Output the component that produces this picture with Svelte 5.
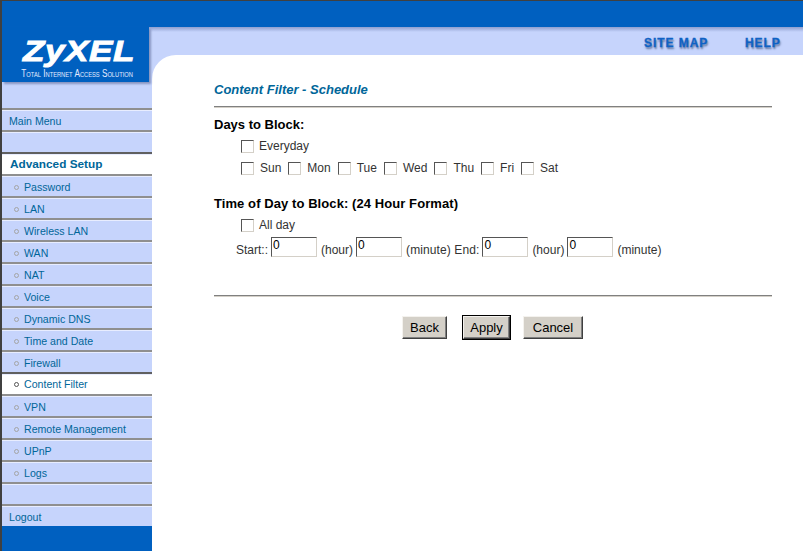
<script>
  const items = ['Password', 'LAN', 'Wireless LAN', 'WAN', 'NAT', 'Voice', 'Dynamic DNS', 'Time and Date', 'Firewall', 'Content Filter', 'VPN', 'Remote Management', 'UPnP', 'Logs'];
  const active = 'Content Filter';
  const days = ['Sun', 'Mon', 'Tue', 'Wed', 'Thu', 'Fri', 'Sat'];
</script>

<div class="page">
  <header class="top">
    <div class="band"></div>
    <div class="strip">
      <div class="shade"></div>
      <nav class="links">
        <span class="site">SITE MAP</span>
        <span class="help">HELP</span>
      </nav>
    </div>
  </header>

  <div class="logo">
    <div class="word">ZyXEL</div>
    <div class="tag">Total Internet Access Solution</div>
  </div>

  <div class="body">
    <aside class="side">
      <div class="gap"></div>
      <div class="row plain">Main Menu</div>
      <div class="row"></div>
      <div class="row head">Advanced Setup</div>
      {#each items as item}
        <div class="row sub" class:on={item === active}>
          <i class="dot"></i>{item}
        </div>
      {/each}
      <div class="row"></div>
      <div class="row plain">Logout</div>
      <div class="foot"></div>
    </aside>

    <main class="main">
      <h1>Content Filter - Schedule</h1>
      <hr />
      <h2 class="days">Days to Block:</h2>
      <div class="line every"><span class="box"></span><span>Everyday</span></div>
      <div class="line week">
        {#each days as d}
          <span class="box"></span><span class="day">{d}</span>
        {/each}
      </div>
      <h2 class="time">Time of Day to Block: (24 Hour Format)</h2>
      <div class="line allday"><span class="box"></span><span>All day</span></div>
      <div class="line hours">
        <span>Start::</span><input value="0" /><span>(hour)</span><input value="0" /><span class="end">(minute) End:</span><input value="0" /><span>(hour)</span><input value="0" /><span>(minute)</span>
      </div>
      <hr class="low" />
      <div class="btns">
        <button class="back">Back</button>
        <button class="def">Apply</button>
        <button class="cancel">Cancel</button>
      </div>
    </main>
  </div>
</div>

<style>
  :global(body) {
    margin: 0;
    background: #fff;
  }
  .page {
    width: 803px;
    height: 551px;
    position: relative;
    overflow: hidden;
    background: #fff;
    font-family: "Liberation Sans", Arial, sans-serif;
    font-size: 12px;
    color: #333;
    border-top: 1px solid #404040;
    border-left: 2px solid #404040;
    box-sizing: border-box;
  }
  .band {
    height: 26px;
    background: #0060c0;
  }
  .strip {
    height: 28px;
    background: #c6d4fc;
    position: relative;
  }
  .shade {
    height: 5px;
    background: linear-gradient(#8e9fcf, #c6d4fc);
  }
  .links {
    font-weight: 700;
    font-size: 12px;
    color: #0f62c4;
    text-shadow: 1px 2px 2px #5a6f9a;
    letter-spacing: 0.95px;
    -webkit-text-stroke: 0.3px #0f62c4;
  }
  .links span {
    position: absolute;
    top: 9px;
  }
  .site { left: 642px; }
  .help { left: 743px; }

  .logo {
    position: absolute;
    left: 0;
    top: 26px;
    width: 147px;
    height: 55px;
    background: #0060c0;
    box-shadow: 2px 2px 2px #8795c0;
    color: #fff;
  }
  .word {
    font-weight: 700;
    font-style: italic;
    font-size: 30px;
    line-height: 28px;
    margin-top: 9.5px;
    text-align: center;
    letter-spacing: 0.5px;
    padding-left: 6px;
    -webkit-text-stroke: 0.9px #fff;
    transform: scaleX(1.17);
  }
  .tag {
    display: flex;
    justify-content: center;
    font-size: 10px;
    line-height: 10px;
    margin-top: 4px;
    padding-left: 4px;
    font-variant: small-caps;
    white-space: nowrap;
    color: #e4ebff;
    transform: scaleX(0.82);
  }

  .body {
    display: flex;
    height: 496px;
    background: #c6d4fc;
  }
  .side {
    width: 150px;
    background: #c6d4fc;
    display: flex;
    flex-direction: column;
    color: #006699;
    flex: none;
    font-size: 10.6px;
  }
  .gap {
    height: 53px;
    flex: none;
  }
  .row {
    height: 18px;
    padding-top: 2px;
    line-height: 19px;
    border-top: 2px solid #8f8f8f;
    box-shadow: inset 0 1px 0 #e8edff;
    flex: none;
  }
  .plain {
    padding-left: 7px;
  }
  .head {
    background: #fff;
    font-weight: 700;
    font-size: 11.8px;
    padding-left: 8px;
    padding-top: 1px;
    height: 19px;
    border-top-color: #606060;
  }
  .sub {
    padding-left: 12px;
    display: flex;
    align-items: center;
  }
  .sub.on {
    background: #fff;
    border-top-color: #606060;
    height: 20px;
    padding-top: 0;
  }
  .dot {
    width: 3px;
    height: 3px;
    border: 1px solid #a4a4a4;
    border-radius: 50%;
    margin-right: 5px;
    flex: none;
  }
  .on .dot {
    border-color: #555;
  }
  .foot {
    flex: 1;
    background: #0060c0;
  }

  .main {
    flex: 1;
    background: #fff;
    border-top-left-radius: 24px;
    padding: 28px 31px 0 62px;
    box-sizing: border-box;
  }
  h1 {
    margin: 0;
    font-size: 13px;
    line-height: 14px;
    font-style: italic;
    font-weight: 700;
    color: #006699;
  }
  hr {
    margin: 9px 0 0;
    height: 2px;
    border: 0;
    background: linear-gradient(#808080 50%, #d4d0c8 50%);
  }
  h2 {
    margin: 0;
    font-size: 13px;
    line-height: 14px;
    font-weight: 700;
    color: #000;
  }
  .days { margin-top: 10px; }
  .time { margin-top: 22px; letter-spacing: 0.08px; }
  .line {
    display: flex;
    align-items: center;
    white-space: nowrap;
    height: 14px;
  }
  .every { margin: 7px 0 0 27px; }
  .week { margin: 8px 0 0 27px; }
  .allday { margin: 7px 0 0 27px; }
  .hours { margin: 5px 0 0 22px; height: 20px; }
  .box {
    width: 11px;
    height: 11px;
    border: 1px solid;
    border-color: #555 #d4d0c8 #d4d0c8 #555;
    margin-right: 6px;
    background: #fff;
    flex: none;
  }
  .every .box, .allday .box { margin-right: 5px; }
  .day { margin-right: 7px; }
  input {
    width: 46px;
    height: 20px;
    box-sizing: border-box;
    padding: 0 0 5px 1px;
    margin: 0 4px 0 3px;
    border: 1px solid;
    border-color: #555 #d4d0c8 #d4d0c8 #555;
    font: 12px "Liberation Sans", Arial, sans-serif;
    color: #000;
    background: #fff;
    outline: none;
  }
  .hours span { padding-top: 6px; }
  .hours .end { letter-spacing: 0.1px; }
  .low { margin-top: 38px; }
  .btns {
    display: flex;
    margin-top: 19px;
    padding-left: 188px;
  }
  button {
    height: 23px;
    box-sizing: border-box;
    padding: 0;
    background: #d4d0c8;
    border: 1px solid;
    border-color: #f4f2ee #404040 #404040 #f4f2ee;
    box-shadow: inset -1px -1px 0 #808080;
    font: 13px "Liberation Sans", Arial, sans-serif;
    color: #000;
  }
  .back { width: 45px; }
  .def {
    width: 47px;
    margin-left: 16px;
    outline: 1px solid #000;
  }
  .cancel {
    width: 60px;
    margin-left: 13px;
  }
</style>
